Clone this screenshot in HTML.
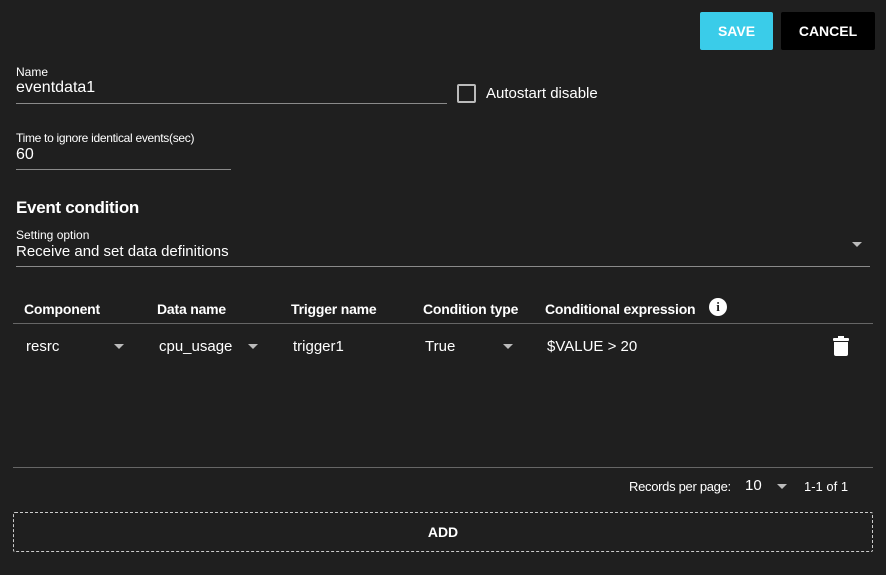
<!DOCTYPE html>
<html><head><style>
*{margin:0;padding:0;box-sizing:border-box}
body{width:886px;height:575px;background:#1f1f1f;font-family:"Liberation Sans",sans-serif;color:#fff;position:relative;overflow:hidden}
.a{position:absolute;white-space:nowrap}
.line{position:absolute;height:1px;background:#8a8a8a}
.arr{position:absolute;width:0;height:0;border-left:5px solid transparent;border-right:5px solid transparent;border-top:5px solid #bbb}
.h{font-weight:bold;font-size:14px;top:301px;letter-spacing:-0.2px}
.r{font-size:15px;top:338px}
</style></head><body>
<div class="a" style="left:700px;top:12px;width:73px;height:38px;background:#3acce9;border-radius:2px;font-weight:bold;font-size:14px;line-height:38px;text-align:center">SAVE</div>
<div class="a" style="left:781px;top:12px;width:94px;height:38px;background:#000;border-radius:2px;font-weight:bold;font-size:14px;line-height:38px;text-align:center">CANCEL</div>

<div class="a" style="left:16px;top:65px;font-size:12px">Name</div>
<div class="a" style="left:16px;top:79px;font-size:16px">eventdata1</div>
<div class="line" style="left:16px;top:103px;width:431px"></div>
<div class="a" style="left:457px;top:84px;width:19px;height:19px;border:2px solid #bbb;border-radius:2px"></div>
<div class="a" style="left:486px;top:85px;font-size:15px">Autostart disable</div>

<div class="a" style="left:16px;top:131px;font-size:12px;letter-spacing:-0.3px">Time to ignore identical events(sec)</div>
<div class="a" style="left:16px;top:146px;font-size:16px">60</div>
<div class="line" style="left:16px;top:169px;width:215px"></div>

<div class="a" style="left:16px;top:198px;font-size:17px;font-weight:bold;letter-spacing:-0.3px">Event condition</div>
<div class="a" style="left:16px;top:228px;font-size:12px">Setting option</div>
<div class="a" style="left:16px;top:243px;font-size:15px">Receive and set data definitions</div>
<div class="arr" style="left:852px;top:242px"></div>
<div class="line" style="left:16px;top:266px;width:854px"></div>

<div class="a h" style="left:24px">Component</div>
<div class="a h" style="left:157px">Data name</div>
<div class="a h" style="left:291px">Trigger name</div>
<div class="a h" style="left:423px">Condition type</div>
<div class="a h" style="left:545px">Conditional expression</div>
<div class="a" style="left:709px;top:298px;width:18px;height:18px;border-radius:50%;background:#fff;color:#1f1f1f;font-weight:bold;font-size:13px;line-height:18px;text-align:center;font-family:'Liberation Serif',serif">i</div>
<div class="line" style="left:13px;top:323px;width:860px;background:#666"></div>

<div class="a r" style="left:26px">resrc</div>
<div class="arr" style="left:114px;top:344px"></div>
<div class="a r" style="left:159px">cpu_usage</div>
<div class="arr" style="left:248px;top:344px"></div>
<div class="a r" style="left:293px">trigger1</div>
<div class="a r" style="left:425px">True</div>
<div class="arr" style="left:503px;top:344px"></div>
<div class="a r" style="left:547px">$VALUE &gt; 20</div>
<div class="a" style="left:833px;top:338px;width:16px;height:3px;background:#fff;border-radius:1px"></div>
<div class="a" style="left:838px;top:336px;width:6px;height:3px;background:#fff"></div>
<div class="a" style="left:834px;top:342px;width:14px;height:14px;background:#fff;border-radius:0 0 2px 2px"></div>

<div class="line" style="left:13px;top:467px;width:860px;background:#666"></div>
<div class="a" style="left:629px;top:479px;font-size:13px;letter-spacing:-0.3px">Records per page:</div>
<div class="a" style="left:745px;top:477px;font-size:15px">10</div>
<div class="arr" style="left:777px;top:484px"></div>
<div class="a" style="left:804px;top:479px;font-size:13px">1-1 of 1</div>

<div class="a" style="left:13px;top:512px;width:860px;height:40px;border:1px dashed #ccc;border-radius:2px;font-weight:bold;font-size:14px;line-height:38px;text-align:center">ADD</div>
</body></html>
